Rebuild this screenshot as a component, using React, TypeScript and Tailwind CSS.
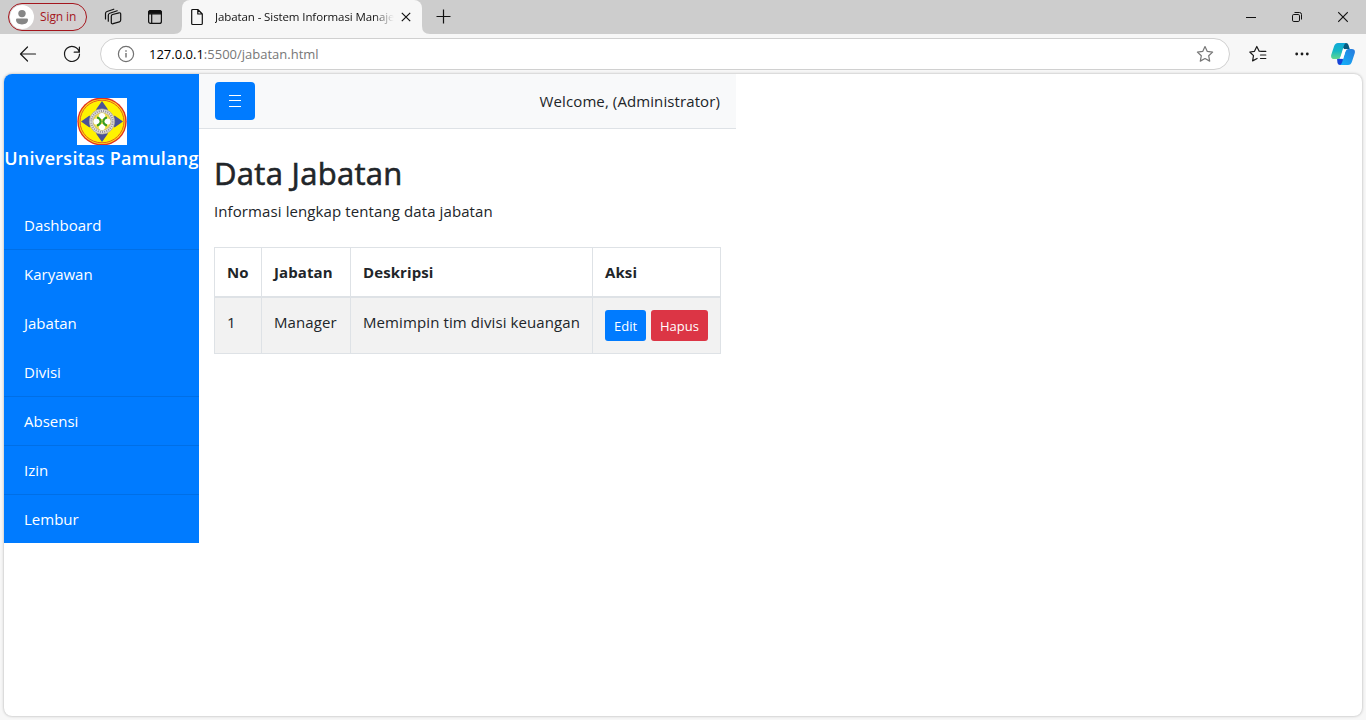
import type { ReactNode } from 'react';

const menu = [
  { label: 'Dashboard', divided: true },
  { label: 'Karyawan', divided: false },
  { label: 'Jabatan', divided: false },
  { label: 'Divisi', divided: true },
  { label: 'Absensi', divided: true },
  { label: 'Izin', divided: true },
  { label: 'Lembur', divided: false },
];

function Icon({ children, className }: { children: ReactNode; className: string }) {
  return (
    <svg viewBox="0 0 20 20" fill="none" stroke="currentColor" strokeWidth="1.2" strokeLinecap="round" strokeLinejoin="round" className={`block h-5 w-5 shrink-0 ${className}`}>
      {children}
    </svg>
  );
}

function TabStrip() {
  return (
    <div className="flex h-[34px] bg-[#cdcdcd] text-[#111]">
      <div className="ml-2 mt-[3px] flex h-7 w-[79px] shrink-0 items-center rounded-full border border-[#a4161d] bg-[#d4d0d0]">
        <svg viewBox="0 0 24 24" className="ml-px block h-6 w-6 shrink-0">
          <circle cx="12" cy="12" r="12" fill="#fff" />
          <circle cx="12" cy="8.6" r="3.7" fill="#868686" />
          <path d="M6 14.8q0-1.2 1.2-1.2h9.6q1.2 0 1.2 1.2c0 3-2.400 4.600-6 4.600s-6-1.600-6-4.600z" fill="#868686" />
        </svg>
        <span className="ml-[6px] whitespace-nowrap text-[12px] leading-4 tracking-[-0.1px] text-[#a4161d]">Sign in</span>
      </div>
      <Icon className="ml-4 mt-[7px]">
        <path d="M9.600 7.500 16 5.800q1.700-.3 1.700 1.300v6q0 1.400-1.300 1.800l-6.300 1.800q-1.800.4-1.800-1.300V9.200q0-1.300 1.300-1.700z" />
        <path d="M5.300 14.200V8.200q0-1.500 1.500-2l7.400-2.400M2.500 12V6.500q0-1.500 1.500-2l6.800-2.300" />
      </Icon>
      <Icon className="ml-[22px] mt-[7px]">
        <rect x="3.600" y="3.600" width="12.800" height="12.800" rx="2" />
        <path d="M3.600 5.600q0-2 2-2h8.800q2 0 2 2v1.200H3.600z" fill="currentColor" />
        <path d="M6.700 7v9.400" />
      </Icon>
      <div className="relative ml-[17px] flex h-[34px] w-[240px] shrink-0 rounded-t-lg bg-[#f7f7f7]">
        <svg viewBox="0 0 8 8" className="absolute -left-2 bottom-0 h-2 w-2"><path d="M8 0v8H0q8 0 8-8" fill="#f7f7f7" /></svg>
        <svg viewBox="0 0 8 8" className="absolute -right-2 bottom-0 h-2 w-2"><path d="M0 0v8h8Q0 8 0 0" fill="#f7f7f7" /></svg>
        <Icon className="ml-[5px] mt-[7px]">
          <path d="M4.700 3.500q0-1 1-1h5.100l4.500 4.500v9.500q0 1-1 1H5.700q-1 0-1-1zM10.800 2.700V7h4.300" />
        </Icon>
        <div className="ml-2 mt-[9px] w-[179px] whitespace-nowrap text-[11.5px] leading-4 tracking-[-0.1px] [mask-image:linear-gradient(to_right,#000_158px,transparent_179px)]">
          Jabatan - Sistem Informasi Manaje
        </div>
        <svg viewBox="0 0 10 10" stroke="currentColor" strokeWidth="1.200" className="ml-[7px] mt-3 block h-[10px] w-[10px] shrink-0"><path d="m.8.800 8.400 8.400m0-8.400L.8 9.200" /></svg>
      </div>
      <svg viewBox="0 0 15 15" stroke="currentColor" strokeWidth="1.200" className="ml-[14px] mt-[9px] block h-[15px] w-[15px] shrink-0"><path d="M7.500.500v14M.5 7.500h14" /></svg>
      <div className="ml-auto mr-[18px] mt-[11px] flex gap-9">
        <svg viewBox="0 0 10 12" fill="none" stroke="currentColor" className="h-3 w-[10px]"><path d="M0 6.500h10" /></svg>
        <svg viewBox="0 0 10 12" fill="none" stroke="currentColor" className="h-3 w-[10px]"><rect x=".5" y="3.500" width="7" height="7" rx="1.300" /><path d="M2.500 1.500h5q2 0 2 2v5" /></svg>
        <svg viewBox="0 0 10 12" fill="none" stroke="currentColor" strokeWidth="1.100" className="h-3 w-[10px]"><path d="m.200 1.200 9.600 9.600m0-9.600-9.600 9.600" /></svg>
      </div>
    </div>
  );
}

function Copilot() {
  return (
    <svg viewBox="0 0 24 22" className="ml-[22px] block h-[22px] w-6 shrink-0">
      <defs>
        <linearGradient id="teal" x1="0" y1="0" x2="0" y2="1"><stop stopColor="#10a8d8" /><stop offset=".5" stopColor="#16b8c4" /><stop offset="1" stopColor="#62d88e" /></linearGradient>
        <linearGradient id="azure" x1="0" y1="1" x2="1" y2="0"><stop stopColor="#12b5fa" /><stop offset="1" stopColor="#2878dc" /></linearGradient>
      </defs>
      <path d="M12 0h3q2 0 2.500 2l1.300 4.300h-5.500L10 2z" fill="#075a80" />
      <path d="M6 15.500h5.500L14 21l-2 1H9q-2 0-2.500-2z" fill="#1745d8" />
      <path d="M7 0h8q-1.500.600-2.200 3L9.600 13.500Q8.800 16 6.500 16H3.200Q-.5 16 .2 12L3 3.500Q4 0 7 0z" fill="url(#teal)" />
      <path d="M17 22H9q1.500-.6 2.200-3l3.200-10.500Q15.200 6 17.500 6h3.300q3.700 0 3 4L21 18.500Q20 22 17 22z" fill="url(#azure)" />
      <path d="M13.200 6.300h3.300q-1.500.6-2.100 2.200l-2.300 7.200H8.500q1-.8 1.400-2.200l2-6.200q.3-.8 1.300-1z" fill="#fff" />
    </svg>
  );
}

const star = 'M10 2.500l2.300 4.900 5.300.7-3.900 3.700 1 5.300-4.700-2.600-4.700 2.600 1-5.300L2.400 8.100l5.300-.7z';

function Toolbar() {
  return (
    <div className="flex h-10 items-center bg-[#f7f7f7] text-[#1a1a1a]">
      <Icon className="ml-[18px]"><path d="M17.500 10H2.500M9.500 3 2.500 10l7 7" /></Icon>
      <Icon className="ml-6"><path d="M17.300 8.200A7.500 7.500 0 1 0 17.500 10M17.400 3v5.200h-5.200" /></Icon>
      <div className="ml-[18px] flex h-8 w-[1130px] shrink-0 items-center rounded-full border border-[#d0d0d0] bg-white">
        <svg viewBox="0 0 18 18" fill="none" stroke="#717171" strokeWidth="1.200" className="ml-4 block h-[18px] w-[18px]"><circle cx="9" cy="9" r="7.600" /><path d="M9 8v4.500M9 5.200v1.500" strokeWidth="1.400" /></svg>
        <span className="ml-[14px] text-[13px] leading-5 text-[#777]"><span className="text-black">127.0.0.1</span>:5500/jabatan.html</span>
        <Icon className="ml-auto mr-[14px] text-[#777]"><path d={star} /></Icon>
      </div>
      <Icon className="ml-[19px]"><path d="M12.700 7.500 10.200 7.200 7.800 2.500 5.500 7.300.8 8l3.700 3.600-.9 5.300 4.500-2.400M11.500 7.400h5.300M11.500 11h5.300M11.500 14.500h5.300" /></Icon>
      <svg viewBox="0 0 14 4" fill="currentColor" className="ml-[26px] block h-1 w-[14px] shrink-0"><circle cx="1.700" cy="2" r="1.400" /><circle cx="7" cy="2" r="1.400" /><circle cx="12.300" cy="2" r="1.400" /></svg>
      <Copilot />
    </div>
  );
}

function UniversityLogo() {
  return (
    <svg viewBox="0 0 50 47" className="block h-[47px] w-[50px] bg-white">
      <ellipse cx="25" cy="23.500" rx="24.700" ry="24" fill="#e3301f" />
      <ellipse cx="25" cy="23.500" rx="23.300" ry="22.600" fill="#ffe21c" />
      <ellipse cx="25" cy="23.500" rx="22" ry="21.300" fill="#fff200" stroke="#e04a20" strokeWidth=".9" />
      <path d="m25 3 6 8.500-6 3-6-3zM25 44l6-8.500-6-3-6 3zM4 23.500l8.500-6 3 6-3 6zM46 23.500l-8.500-6-3 6 3 6z" fill="#4b5396" />
      <circle cx="25" cy="23.500" r="12.600" fill="#e7e5df" stroke="#aaa48c" strokeWidth=".8" />
      <circle cx="25" cy="23.500" r="10.600" fill="none" stroke="#9d97a0" strokeWidth="2" strokeDasharray="1.200 1" />
      <circle cx="25" cy="23.500" r="8.800" fill="#f4e250" stroke="#a9a05a" strokeWidth=".6" />
      <g fill="#fff"><circle cx="25" cy="18" r="3.100" /><circle cx="25" cy="29" r="3.100" /><circle cx="19.500" cy="23.500" r="3.100" /><circle cx="30.500" cy="23.500" r="3.100" /></g>
      <path d="M20 19.500q3.200.5 3.800 4-.6 3.500-3.800 4M30 19.500q-3.200.5-3.800 4 .6 3.500 3.800 4" fill="none" stroke="#369c24" strokeWidth="1.900" />
    </svg>
  );
}

function Sidebar() {
  return (
    <aside className="flex h-[469px] w-[195px] shrink-0 flex-col bg-[#007bff] text-white">
      <div className="flex h-[127px] shrink-0 flex-col items-center pt-6">
        <UniversityLogo />
        <h5 className="mt-px whitespace-nowrap text-[18px] font-semibold leading-6 tracking-[0.26px]">Universitas Pamulang</h5>
      </div>
      <nav className="flex flex-col">
        {menu.map((item) => (
          <a key={item.label} className={`flex h-[49px] items-center border-b pl-5 text-[15px] leading-6 ${item.divided ? 'border-[#006fe6]' : 'border-transparent'}`}>{item.label}</a>
        ))}
      </nav>
    </aside>
  );
}

const head = 'border-b-2 border-l border-[#dee2e6] pl-3 font-bold';
const cell = 'whitespace-nowrap border-b border-l border-[#dee2e6] pl-3 pt-3';

function Main() {
  return (
    <main className="w-[537px] text-[15px] leading-6 tracking-[0.1px] text-[#212529]">
      <header className="flex h-[55px] items-center justify-between border-b border-[#dee2e6] bg-[#f8f9fa] px-4">
        <button className="flex h-[38px] w-10 items-center justify-center rounded bg-[#007bff] text-white">
          <svg viewBox="0 0 12 12" stroke="currentColor" className="h-3 w-3"><path d="M0 .5h12M0 5.500h12M0 11.500h12" /></svg>
        </button>
        <span className="whitespace-nowrap">Welcome, (Administrator)</span>
      </header>
      <section className="pl-[15px]">
        <h1 className="pt-[25px] text-[31px] leading-[38px] tracking-[0.3px] [-webkit-text-stroke:0.6px_#212529]">Data Jabatan</h1>
        <p className="mt-[7px] whitespace-nowrap">Informasi lengkap tentang data jabatan</p>
        <table className="mt-6 w-[507px] table-fixed border-separate border-spacing-0 border-r border-t border-[#dee2e6] text-left">
          <colgroup><col className="w-[47px]" /><col className="w-[89px]" /><col className="w-[242px]" /><col className="w-[128px]" /></colgroup>
          <thead>
            <tr className="h-[50px]">
              <th className={head}>No</th>
              <th className={head}>Jabatan</th>
              <th className={head}>Deskripsi</th>
              <th className={head}>Aksi</th>
            </tr>
          </thead>
          <tbody>
            <tr className="h-14 bg-[#f2f2f2] align-top">
              <td className={cell}>1</td>
              <td className={cell}>Manager</td>
              <td className={cell}>Memimpin tim divisi keuangan</td>
              <td className={cell}>
                <div className="flex gap-[5px] text-[13px] leading-5 tracking-normal text-white">
                  <button className="h-[31px] w-[41px] rounded-[3px] bg-[#007bff]">Edit</button>
                  <button className="h-[31px] w-[57px] rounded-[3px] bg-[#dc3545]">Hapus</button>
                </div>
              </td>
            </tr>
          </tbody>
        </table>
      </section>
    </main>
  );
}

export default function App() {
  return (
    <div className="flex h-[720px] w-[1366px] flex-col overflow-hidden bg-[#f7f7f7] font-['Open_Sans','Noto_Sans',sans-serif]">
      <TabStrip />
      <Toolbar />
      <div className="mx-1 flex h-[642px] items-start overflow-hidden rounded-lg bg-white shadow-[0_0_3px_rgba(0,0,0,0.3)]">
        <Sidebar />
        <Main />
      </div>
    </div>
  );
}
